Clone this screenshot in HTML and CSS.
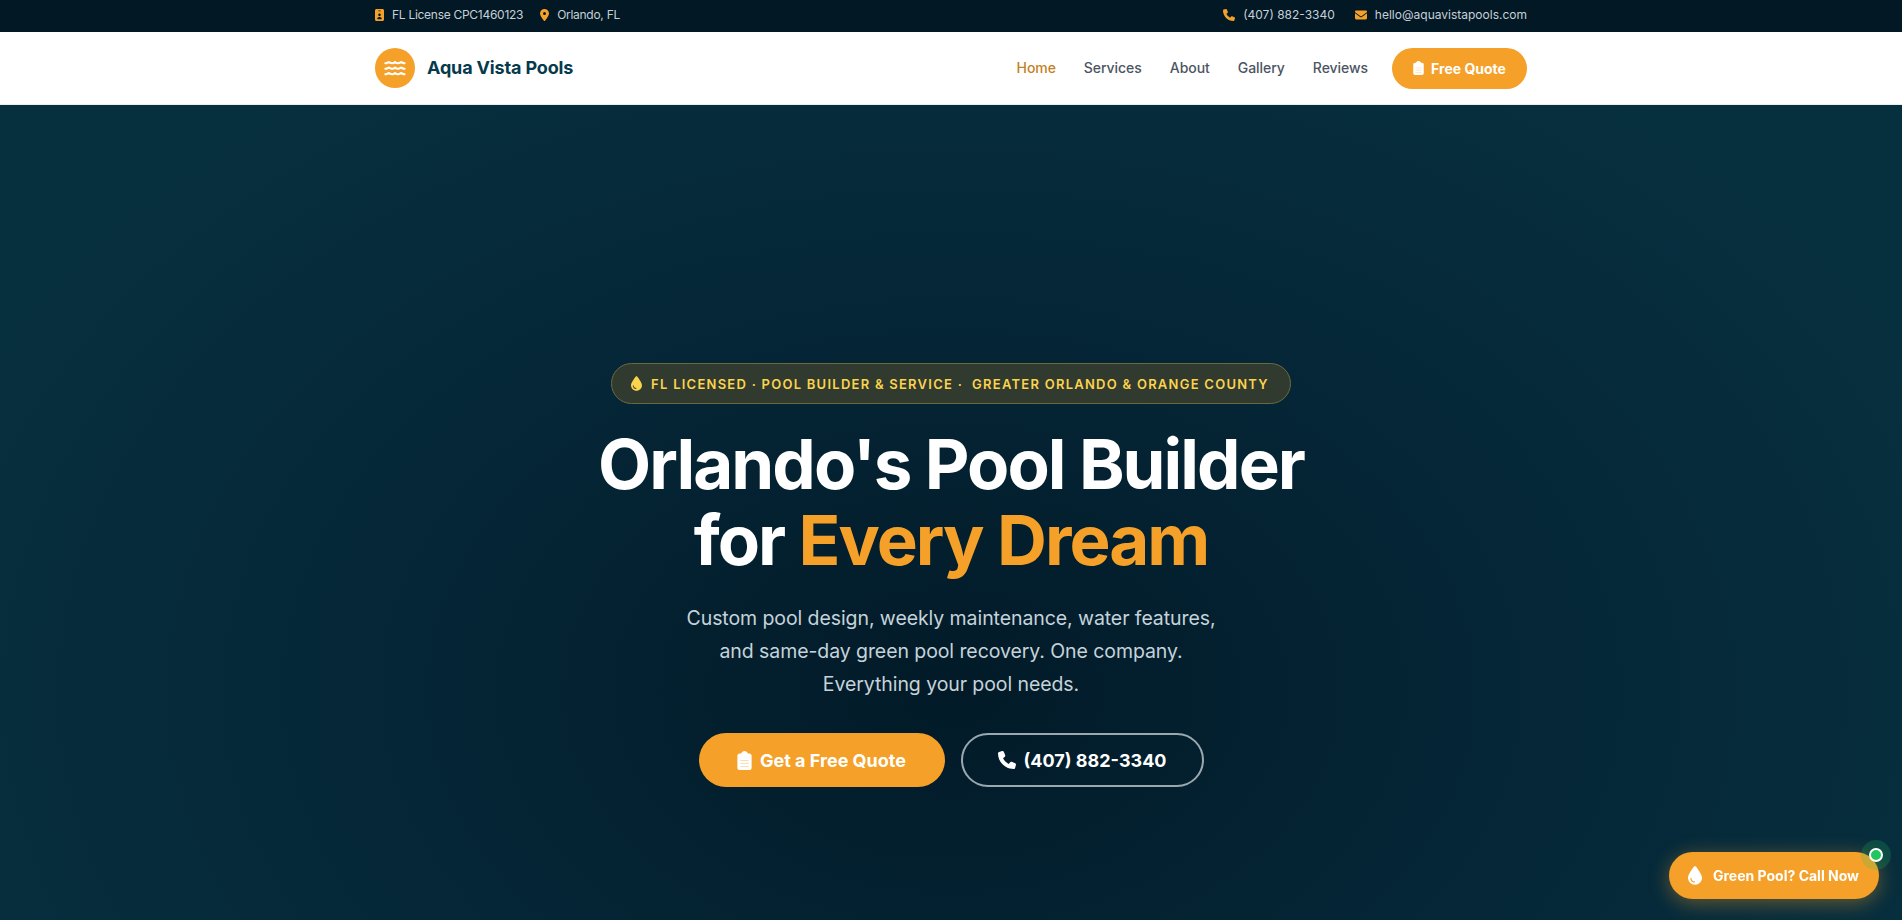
FILE: index.html
```html
<!DOCTYPE html>
<html lang="en">
<head>
<meta charset="utf-8">
<title>Aqua Vista Pools</title>
<link rel="stylesheet" href="styles.css">
</head>
<body>
<div class="topbar">
  <div class="wrap topbar-in">
    <div class="tgroup">
      <span class="titem tight"><svg class="ti ti-n" viewBox="0 0 384 512"><path d="M64 0C28.700 0 0 28.700 0 64V448c0 35.300 28.700 64 64 64H320c35.300 0 64-28.700 64-64V64c0-35.300-28.700-64-64-64H64zm80 64h96v32h-96V64zm48 128a56 56 0 1 1 0 112 56 56 0 1 1 0-112zM96 416c0-44 36-80 80-80h32c44 0 80 36 80 80 0 9-7 16-16 16H112c-9 0-16-7-16-16z"/></svg>FL License CPC1460123</span>
      <span class="titem tight"><svg class="ti ti-n" viewBox="0 0 384 512"><path d="M215.700 499.200C267 435 384 279.400 384 192 384 86 298 0 192 0S0 86 0 192c0 87.400 117 243 168.300 307.200 12.300 15.300 35.100 15.300 47.400 0zM192 128a64 64 0 1 1 0 128 64 64 0 1 1 0-128z"/></svg>Orlando, FL</span>
    </div>
    <div class="tgroup tgroup-r">
      <span class="titem"><svg class="ti" viewBox="0 0 512 512"><path d="M164.900 24.600c-7.700-18.600-28-28.500-47.400-23.200l-88 24C12.100 30.200 0 46 0 64C0 311.400 200.600 512 448 512c18 0 33.800-12.100 38.600-29.500l24-88c5.300-19.400-4.600-39.700-23.200-47.400l-96-40c-16.300-6.800-35.200-2.100-46.300 11.600L304.700 368C234.300 334.700 177.300 277.700 144 207.300L193.300 167c13.700-11.200 18.400-30 11.600-46.300l-40-96z"/></svg>(407) 882-3340</span>
      <span class="titem"><svg class="ti" viewBox="0 0 512 512"><path d="M48 64C21.500 64 0 85.500 0 112c0 15.100 7.100 29.300 19.200 38.400L236.800 313.600c11.400 8.500 27 8.500 38.400 0L492.800 150.400c12.100-9.100 19.200-23.300 19.200-38.400c0-26.500-21.500-48-48-48H48zM0 176V384c0 35.300 28.700 64 64 64H448c35.300 0 64-28.700 64-64V176L294.400 339.200c-22.800 17.100-54 17.100-76.800 0L0 176z"/></svg>hello@aquavistapools.com</span>
    </div>
  </div>
</div>
<header class="nav">
  <div class="wrap nav-in">
    <a class="brand" href="#">
      <span class="logo"><svg class="logo-ic" viewBox="0 0 24 16" fill="none" stroke="#fff" stroke-width="2.300" stroke-linecap="round" stroke-linejoin="round"><path d="M1.500 2.300c1.500 0 3-1 4-1.300 1.500 1 3 1.300 3.500 1.300s2-.3 3-1.300c1 1 2.500 1.300 3 1.300s2-.3 3.500-1.300c1 .3 2.500 1.300 4 1.300"/><path d="M1.500 8.300c1.500 0 3-1 4-1.300 1.500 1 3 1.300 3.500 1.300s2-.3 3-1.300c1 1 2.500 1.300 3 1.300s2-.3 3.500-1.300c1 .3 2.500 1.300 4 1.300"/><path d="M1.500 14.300c1.500 0 3-1 4-1.300 1.500 1 3 1.300 3.500 1.300s2-.3 3-1.300c1 1 2.500 1.300 3 1.300s2-.3 3.500-1.300c1 .3 2.500 1.300 4 1.300"/></svg></span>
      <span class="brand-name">Aqua Vista Pools</span>
    </a>
    <nav class="links">
      <a class="link active" href="#">Home</a>
      <a class="link" href="#">Services</a>
      <a class="link" href="#">About</a>
      <a class="link" href="#">Gallery</a>
      <a class="link" href="#">Reviews</a>
      <a class="navcta" href="#"><svg class="clip-sm" viewBox="0 0 384 512"><path class="clip-body" d="M192 0c-41.800 0-77.400 26.700-90.500 64H64C28.700 64 0 92.700 0 128V448c0 35.300 28.700 64 64 64H320c35.300 0 64-28.700 64-64V128c0-35.300-28.700-64-64-64H282.500C269.400 26.700 233.800 0 192 0z"/><path class="clip-lines" d="M80 256H304M80 336H304M80 416H304"/></svg>Free Quote</a>
    </nav>
  </div>
</header>
<main class="hero">
  <div class="badge"><svg class="drop-b" viewBox="0 0 384 512"><path d="M192 512C86 512 0 426 0 320C0 228.800 130.200 57.700 166.600 11.700C172.600 4.200 181.500 0 191.100 0h1.800c9.600 0 18.500 4.200 24.500 11.700C253.800 57.700 384 228.800 384 320c0 106-86 192-192 192zM96 336c0-8.800-7.200-16-16-16s-16 7.200-16 16c0 61.900 50.100 112 112 112c8.800 0 16-7.200 16-16s-7.200-16-16-16c-44.200 0-80-35.800-80-80z"/></svg>FL LICENSED · POOL BUILDER &amp; SERVICE ·&nbsp; GREATER ORLANDO &amp; ORANGE COUNTY</div>
  <h1 class="title">Orlando's Pool Builder<br>for <span class="accent">Every Dream</span></h1>
  <p class="lead">Custom pool design, weekly maintenance, water features,<br>and same-day green pool recovery. One company.<br>Everything your pool needs.</p>
  <div class="actions">
    <a class="btn btn-fill" href="#"><svg class="clip-lg" viewBox="0 0 384 512"><path class="clip-body" d="M192 0c-41.800 0-77.400 26.700-90.500 64H64C28.700 64 0 92.700 0 128V448c0 35.300 28.700 64 64 64H320c35.300 0 64-28.700 64-64V128c0-35.300-28.700-64-64-64H282.500C269.400 26.700 233.800 0 192 0z"/><path class="clip-lines" d="M80 256H304M80 336H304M80 416H304"/></svg>Get a Free Quote</a>
    <a class="btn btn-line" href="#"><svg class="ph-lg" viewBox="0 0 512 512"><path d="M164.900 24.600c-7.700-18.600-28-28.500-47.400-23.200l-88 24C12.100 30.200 0 46 0 64C0 311.400 200.600 512 448 512c18 0 33.800-12.100 38.600-29.500l24-88c5.300-19.400-4.600-39.700-23.200-47.400l-96-40c-16.300-6.800-35.200-2.100-46.300 11.600L304.700 368C234.300 334.700 177.300 277.700 144 207.300L193.300 167c13.700-11.200 18.400-30 11.600-46.300l-40-96z"/></svg>(407) 882-3340</a>
  </div>
</main>
<a class="float" href="#"><svg class="drop-f" viewBox="0 0 384 512"><path d="M192 512C86 512 0 426 0 320C0 228.800 130.200 57.700 166.600 11.700C172.600 4.200 181.500 0 191.100 0h1.800c9.600 0 18.500 4.200 24.500 11.700C253.800 57.700 384 228.800 384 320c0 106-86 192-192 192zM96 336c0-8.800-7.200-16-16-16s-16 7.200-16 16c0 61.900 50.100 112 112 112c8.800 0 16-7.200 16-16s-7.200-16-16-16c-44.200 0-80-35.800-80-80z"/></svg>Green Pool? Call Now<span class="dot"></span></a>
</body>
</html>
```

FILE: styles.css
```css
* { box-sizing: border-box; }
html, body { margin: 0; height: 100%; overflow: hidden; }
body {
  font-family: "Inter", "Noto Sans", "Liberation Sans", sans-serif;
  background: #02202f;
  display: flex;
  flex-direction: column;
  color: #fff;
}
a { color: inherit; text-decoration: none; }
.wrap { width: 1152px; margin: 0 auto; display: flex; align-items: center; justify-content: space-between; }
.topbar { height: 32px; background: #021824; flex: none; padding-bottom: 3px; }
.topbar-in { height: 100%; font-size: 12px; color: #c6d0d8; }
.tgroup { display: flex; gap: 17px; }
.tgroup-r { gap: 20px; }
.titem { display: flex; align-items: center; gap: 8px; }
.tight { letter-spacing: -0.28px; }
.ti { height: 12px; width: 12px; fill: #f5a028; flex: none; }
.ti-n { width: 9px; }
.nav { height: 73px; background: #fff; flex: none; border-bottom: 1px solid #e5eef0; }
.nav-in { height: 72px; }
.brand { display: flex; align-items: center; gap: 12px; }
.logo { width: 40px; height: 40px; border-radius: 50%; background: #f5a028; display: flex; align-items: center; justify-content: center; }
.logo-ic { width: 22px; height: 15px; }
.brand-name { font-size: 18px; font-weight: 700; color: #063a4c; letter-spacing: -0.15px; padding-bottom: 2px; }
.links { display: flex; align-items: center; gap: 28px; }
.link { font-size: 14px; font-weight: 500; color: #4b5563; letter-spacing: -0.05px; padding-bottom: 1px; }
.link.active { color: #c47f24; }
.navcta { display: flex; align-items: center; gap: 7px; height: 41px; padding: 0 20px; width: 135px; justify-content: center; margin-left: -4px; border-radius: 999px; background: #f5a028; color: #fff; font-size: 14px; font-weight: 700; }
.clip-sm { width: 11px; height: 14px; }
.clip-body { fill: #fff; }
.clip-lines { fill: none; stroke: #f5a028; stroke-width: 22; opacity: .45; }
.hero {
  flex: 1;
  display: flex;
  flex-direction: column;
  align-items: center;
  background: radial-gradient(ellipse 1100px 760px at 50% 72%, #021a28 0%, #052738 55%, #07303f 100%);
  padding-top: 258px;
}
.badge { display: flex; align-items: center; gap: 9px; height: 41px; padding: 0 21px 0 19px; border-radius: 999px; border: 1px solid #6b6a3f; background: #303a2f; color: #fcd34d; font-size: 13px; font-weight: 600; letter-spacing: 1.250px; }
.drop-b { width: 11px; height: 15px; fill: #fcd34d; }
.title { margin: 22px 0 0; font-size: 69px; line-height: 76px; font-weight: 700; text-align: center; letter-spacing: -1.950px; color: #fff; }
.accent { color: #f5a028; }
.lead { margin: 24px 0 0; font-size: 19.500px; line-height: 33px; font-weight: 400; text-align: center; letter-spacing: -0.080px; color: #c5d3da; }
.actions { display: flex; gap: 16px; margin-top: 32px; }
.btn { display: flex; align-items: center; justify-content: center; height: 54px; border-radius: 999px; font-size: 18px; font-weight: 700; gap: 8px; }
.btn-fill { width: 246px; background: #f5a028; }
.btn-line { width: 243px; border: 2px solid #9aa8b0; }
.clip-lg { width: 15px; height: 19px; }
.ph-lg { width: 18px; height: 18px; fill: #fff; }
.float { position: fixed; right: 23px; bottom: 21px; display: flex; align-items: center; gap: 11px; height: 47px; padding: 0 20px 0 19px; border-radius: 999px; background: #f5a028; color: #fff; font-size: 14px; font-weight: 700; box-shadow: 0 4px 20px rgba(245,160,40,.4); }
.drop-f { width: 14px; height: 19px; fill: #fff; }
.dot { position: absolute; top: -4px; right: -4px; width: 14px; height: 14px; border-radius: 50%; background: #22c55e; border: 2px solid #fff; box-shadow: 0 0 0 8px rgba(34,197,94,.2); }
```
